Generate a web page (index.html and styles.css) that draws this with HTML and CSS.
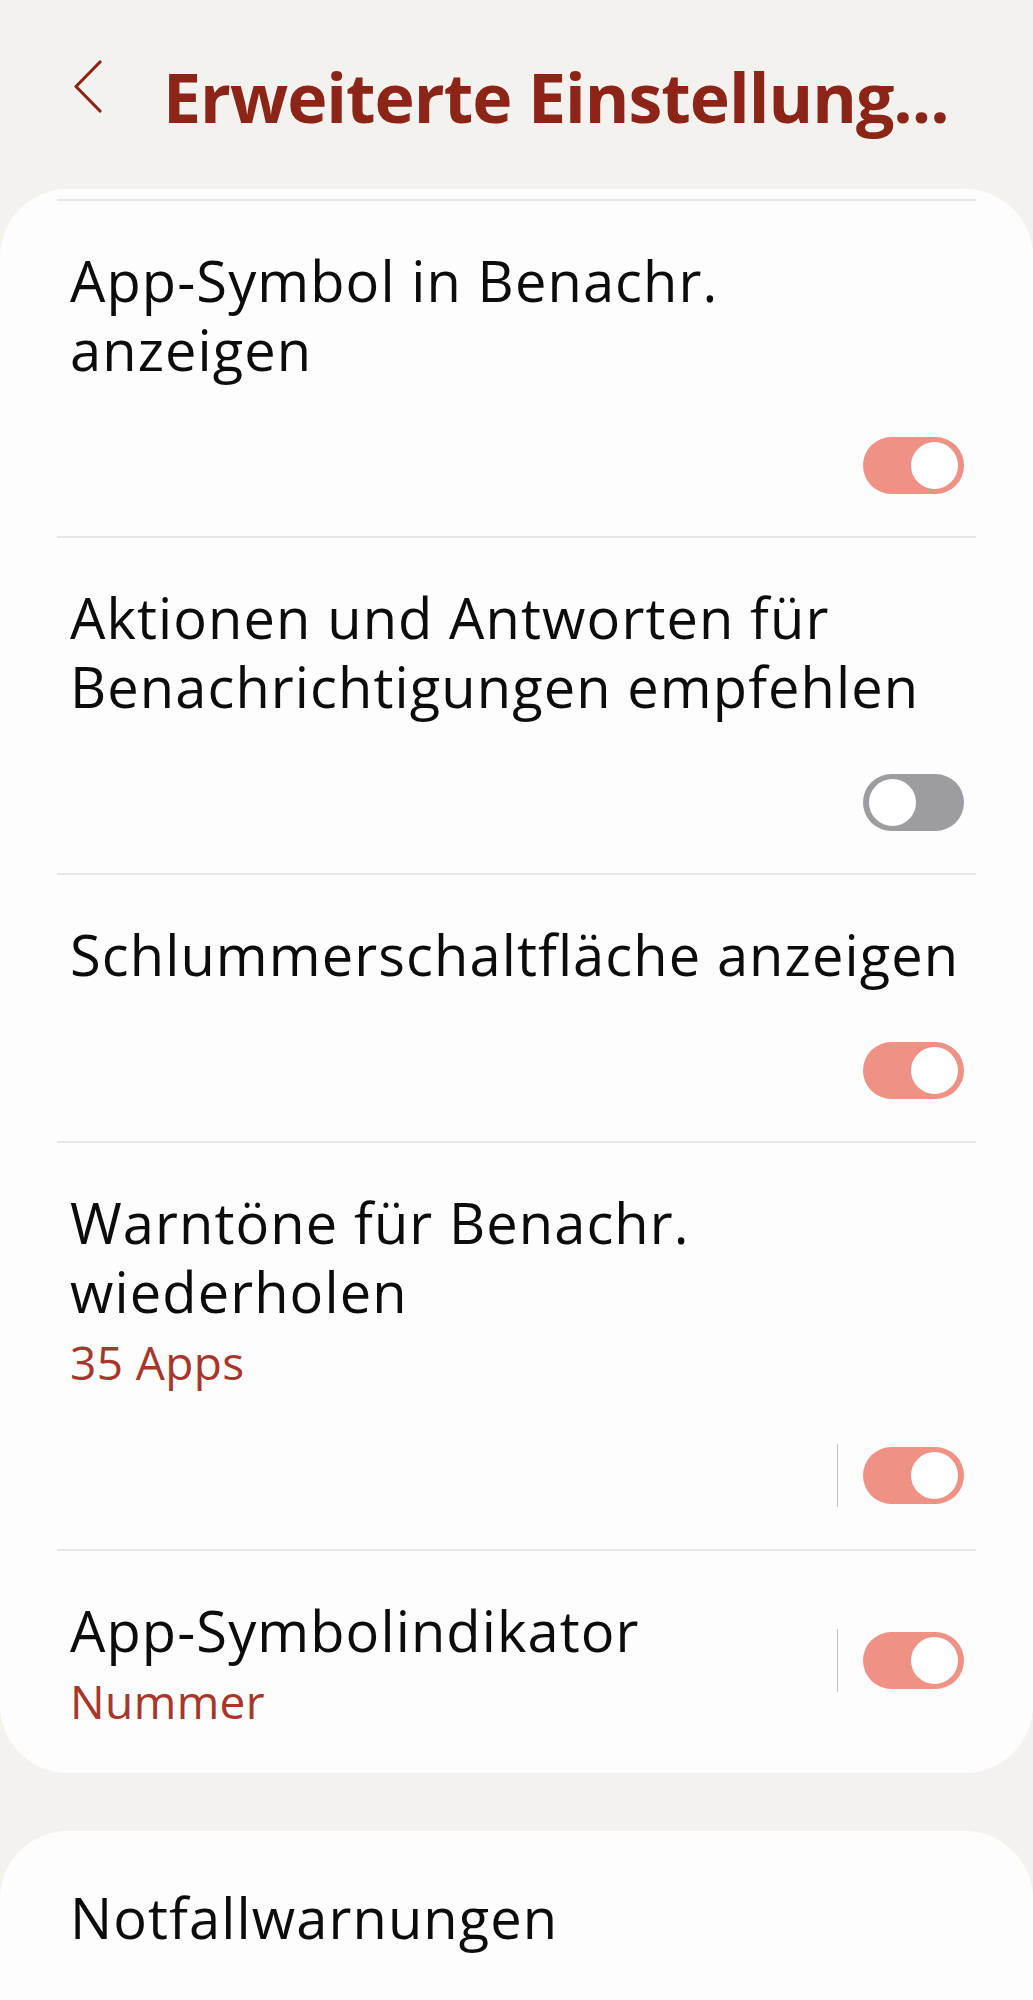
FILE: index.html
```html
<!DOCTYPE html>
<html lang="de">
<head>
  <meta charset="UTF-8">
  <meta name="viewport" content="width=device-width, initial-scale=1.0">
  <title>Erweiterte Einstellungen</title>
  <link rel="stylesheet" href="styles.css">
</head>
<body>
  <div class="header">
    <button class="back" aria-label="Zurück">
      <svg width="30" height="53" viewBox="0 0 30 53"><path d="M27 2 L3 26.5 L27 51" fill="none" stroke="#8c2417" stroke-width="3.2" stroke-linecap="round" stroke-linejoin="round"/></svg>
    </button>
    <h1 class="title">Erweiterte Einstellung...</h1>
  </div>

  <div class="card">
    <div class="sep"></div>

    <div class="item">
      <div class="label">App-Symbol in Benachr.<br>anzeigen</div>
      <div class="controls"><span class="switch on"></span></div>
    </div>
    <div class="sep"></div>

    <div class="item">
      <div class="label">Aktionen und Antworten für<br>Benachrichtigungen empfehlen</div>
      <div class="controls"><span class="switch"></span></div>
    </div>
    <div class="sep"></div>

    <div class="item">
      <div class="label">Schlummerschaltfläche anzeigen</div>
      <div class="controls"><span class="switch on"></span></div>
    </div>
    <div class="sep"></div>

    <div class="item">
      <div class="label">Warntöne für Benachr.<br>wiederholen</div>
      <div class="sub">35 Apps</div>
      <div class="controls"><span class="vline"></span><span class="switch on"></span></div>
    </div>
    <div class="sep"></div>

    <div class="item row last">
      <div class="text">
        <div class="label">App-Symbolindikator</div>
        <div class="sub">Nummer</div>
      </div>
      <div class="controls"><span class="vline"></span><span class="switch on"></span></div>
    </div>
  </div>

  <div class="card second">
    <div class="item">
      <div class="label">Notfallwarnungen</div>
    </div>
  </div>
</body>
</html>
```

FILE: styles.css
```css
body {
  margin: 0;
  font-family: "Open Sans", "Noto Sans", sans-serif;
  background-color: #f3f2ef;
  color: #0c0c0c;
  overflow: hidden;
}
.header {
  height: 189px;
  display: flex;
  align-items: center;
  padding: 0 0 0 73px;
  box-sizing: border-box;
  gap: 60px;
}
.back {
  background: none;
  border: none;
  padding: 0;
  margin-top: -16px;
  display: flex;
}
.title {
  margin: 0 0 -4px 0;
  font-size: 68px;
  font-weight: 700;
  color: #8c2417;
  letter-spacing: -1px;
  white-space: nowrap;
}
.card {
  background-color: #fdfdfd;
  border-radius: 68px;
  padding-top: 10px;
}
.card.second {
  margin-top: 58px;
  padding-top: 0;
  height: 300px;
}
.sep {
  height: 2px;
  margin: 0 57px;
  background-color: #e6e6e8;
}
.item {
  padding: 45px 69px 42px 70px;
}
.card.second .item {
  padding-top: 52px;
}
.label {
  font-size: 56px;
  line-height: 69px;
  letter-spacing: 1.1px;
}
.sub {
  font-size: 46px;
  line-height: 58px;
  margin-top: 7px;
  letter-spacing: 0.4px;
  color: #a8362a;
}
.controls {
  display: flex;
  justify-content: flex-end;
  align-items: center;
  gap: 25px;
  margin-top: 53px;
}
.item.row {
  display: flex;
  align-items: center;
  justify-content: space-between;
}
.item.row .controls {
  margin-top: -6px;
}
.item.last {
  padding-bottom: 43px;
}
.vline {
  width: 1px;
  height: 63px;
  background-color: #c4c4c4;
}
.switch {
  width: 101px;
  height: 57px;
  border-radius: 29px;
  background-color: #9d9da1;
  position: relative;
  display: block;
}
.switch::after {
  content: "";
  position: absolute;
  top: 5px;
  left: 6px;
  width: 47px;
  height: 47px;
  border-radius: 50%;
  background-color: #fff;
}
.switch.on {
  background-color: #ef9184;
}
.switch.on::after {
  left: auto;
  right: 6px;
}
```
